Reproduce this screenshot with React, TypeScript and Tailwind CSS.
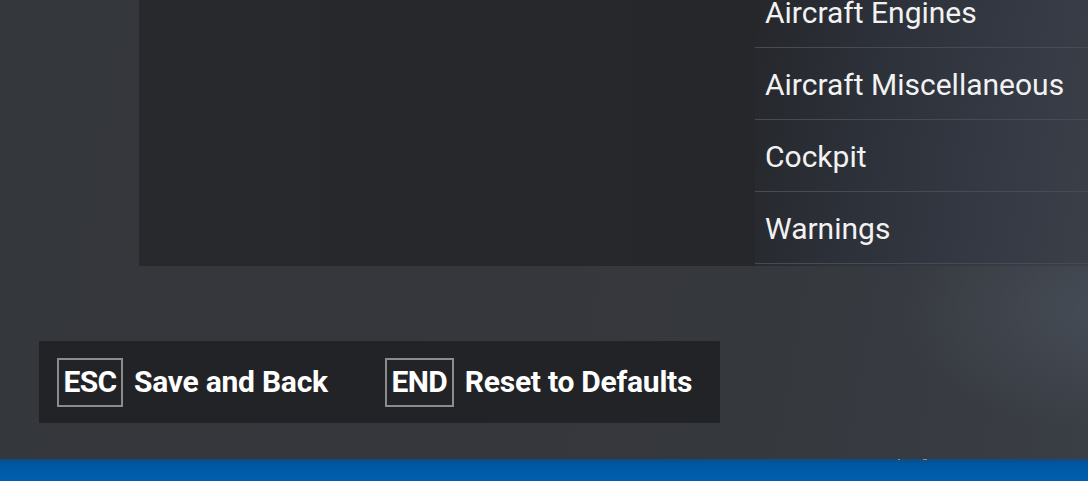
const ROWS = ["Aircraft Engines", "Aircraft Miscellaneous", "Cockpit", "Warnings"];

const KEYS = [
  { key: "ESC", label: "Save and Back", box: "w-[66px]" },
  { key: "END", label: "Reset to Defaults", box: "w-[69px]" },
];

export default function App() {
  return (
    <div
      className="relative w-[1088px] h-[481px] overflow-hidden flex flex-col bg-[linear-gradient(100deg,#34373b_0%,#36373c_40%,#35383d_70%,#3a3e45_100%)] text-white"
      style={{ fontFamily: "Roboto, 'Noto Sans', sans-serif" }}
    >
      {/* light bloom at the right edge */}
      <div className="absolute right-[-230px] top-[190px] w-[420px] h-[240px] rounded-full bg-[radial-gradient(closest-side,rgba(78,86,98,0.6),rgba(78,86,98,0))] pointer-events-none" />

      {/* upper area */}
      <div className="relative flex h-[266px] shrink-0">
        <div className="w-[139px] shrink-0" />
        <div className="w-[616px] shrink-0 bg-[linear-gradient(90deg,#28292d_0%,#27282c_60%,#25272b_100%)]" />
        <div className="flex-1 bg-[linear-gradient(100deg,#25272b_0%,#2e323b_40%,#353a44_75%,#3a3f48_100%)]">
          <div className="mt-[-24px] flex flex-col">
            {ROWS.map((r) => (
              <div
                key={r}
                className="h-[72px] flex items-center pl-[10px] pt-[3px] border-b border-[#474b54] text-[30px] leading-none text-[#f2f2f2] whitespace-nowrap"
              >
                {r}
              </div>
            ))}
          </div>
        </div>
      </div>

      {/* key hints */}
      <div className="relative ml-[39px] mt-[75px] w-[681px] h-[82px] bg-[#222327] flex items-center pl-[18px]">
        {KEYS.map((k, i) => (
          <div key={k.key} className={"flex items-center " + (i > 0 ? "ml-[57px]" : "")}>
            <div
              className={
                k.box +
                " h-[49px] border-2 border-[#8c8c8c] flex items-center justify-center text-[30px] font-bold leading-none tracking-[-0.6px]"
              }
            >
              {k.key}
            </div>
            <span className="ml-[11px] text-[30px] font-bold leading-none tracking-[-0.25px] whitespace-nowrap">
              {k.label}
            </span>
          </div>
        ))}
      </div>

      {/* blue taskbar */}
      <div className="relative mt-auto h-[22px] bg-[linear-gradient(180deg,#0c4c85_0%,#0058a2_25%,#005fae_100%)]">
        <div className="absolute left-[898px] top-0 w-[2px] h-[1px] bg-[#8a8a8a]" />
        <div className="absolute left-[923px] top-0 w-[4px] h-[1px] bg-[#a08a70]" />
      </div>
    </div>
  );
}
